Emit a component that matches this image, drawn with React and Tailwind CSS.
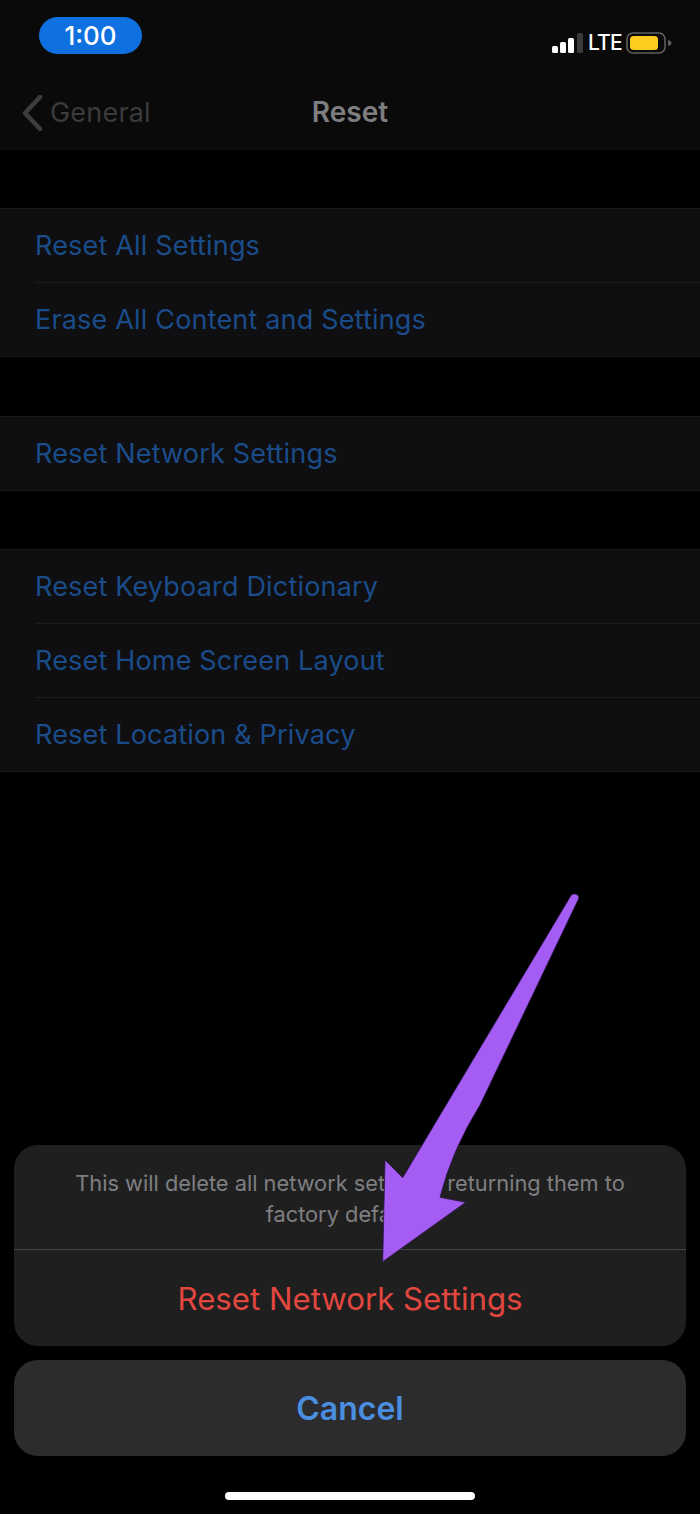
const font = { fontFamily: '"Inter", "Liberation Sans", sans-serif' };

function Row({ label, last }) {
  return (
    <div className="pl-[35px]">
      <div className={`flex items-center pt-[2px] text-[27px] tracking-[0.18px] text-[#1b4c8a] ${last ? "h-[73px]" : "h-[74px] border-b border-[#1d1d1f]"}`}>
        {label}
      </div>
    </div>
  );
}

function Group({ items, className }) {
  return (
    <section className={`bg-[#0f0f11] border-y border-[#1a1a1c] ${className}`}>
      {items.map((t, i) => (
        <Row key={t} label={t} last={i === items.length - 1} />
      ))}
    </section>
  );
}

function Signal() {
  return (
    <svg width="31" height="20" viewBox="0 0 31 20">
      <rect x="0" y="13" width="6" height="7" rx="1.5" fill="#fff" />
      <rect x="8" y="9" width="6" height="11" rx="1.5" fill="#fff" />
      <rect x="16" y="5" width="6" height="15" rx="1.5" fill="#fff" />
      <rect x="25" y="0" width="6" height="20" rx="1.5" fill="#3a3a3c" />
    </svg>
  );
}

function Battery() {
  return (
    <svg width="46" height="22" viewBox="0 0 46 22">
      <rect x="1" y="1" width="38" height="20" rx="6" fill="none" stroke="#5f5f5c" strokeWidth="1.6" />
      <rect x="4" y="4" width="28" height="14" rx="3.5" fill="#fccc1f" />
      <path d="M42 8 C44 8.5 45.5 9.5 45.5 11 C45.5 12.5 44 13.5 42 14 Z" fill="#5f5f5c" />
    </svg>
  );
}

export default function App() {
  return (
    <div className="relative w-[700px] h-[1514px] bg-black overflow-hidden flex flex-col" style={font}>
      <header className="h-[150px] shrink-0 bg-[#0a0a0b] border-b border-[#111113] flex flex-col">
        <div className="h-[71px] flex items-center justify-between pl-[39px] pr-[28px]">
          <div className="w-[103px] h-[37px] rounded-full bg-[#0f70e0] flex items-center justify-center text-white text-[26px] font-medium">
            1:00
          </div>
          <div className="flex items-center mt-[14px]">
            <Signal />
            <span className="ml-[5px] mr-[6px] w-[32px] text-white text-[21px] tracking-[-0.8px] font-medium leading-none">LTE</span>
            <Battery />
          </div>
        </div>
        <div className="relative flex-1 flex items-center justify-center">
          <div className="absolute left-[21px] top-[22px] flex items-center gap-[7px]">
            <svg width="22" height="36" viewBox="0 0 22 36" fill="none">
              <path d="M19 2 L4 18 L19 34" stroke="#3d3d3f" strokeWidth="4.5" strokeLinecap="round" strokeLinejoin="round" />
            </svg>
            <span className="text-[27px] tracking-[0.2px] text-[#3b3b3d]">General</span>
          </div>
          <h1 className="text-[28px] font-semibold text-[#7e7e80] mt-[4px]">Reset</h1>
        </div>
      </header>

      <main className="flex-1 flex flex-col">
        <Group className="mt-[58px]" items={["Reset All Settings", "Erase All Content and Settings"]} />
        <Group className="mt-[59px]" items={["Reset Network Settings"]} />
        <Group className="mt-[58px]" items={["Reset Keyboard Dictionary", "Reset Home Screen Layout", "Reset Location & Privacy"]} />

        <div className="mt-auto px-[14px] pb-[14px] flex flex-col items-center">
          <div className="w-full rounded-[24px] bg-[#1f1f20] overflow-hidden">
            <div className="h-[105px] border-b border-[#454546] flex items-center justify-center text-center text-[21.8px] leading-[31px] text-[#7f7f81] pt-[3px] px-[40px]">
              This will delete all network settings, returning them to factory defaults.
            </div>
            <div className="h-[96px] pt-[2px] flex items-center justify-center text-[31.2px] text-[#e2473f]">
              Reset Network Settings
            </div>
          </div>
          <div className="w-full h-[96px] pt-[2px] mt-[14px] rounded-[24px] bg-[#2c2c2e] flex items-center justify-center text-[32px] font-semibold text-[#4a8ee0]">
            Cancel
          </div>
          <div className="w-[250px] h-[8px] mt-[36px] rounded-full bg-white" />
        </div>
      </main>

      <svg className="absolute left-0 top-0 pointer-events-none" width="700" height="1514" viewBox="0 0 700 1514">
        <path
          d="M571 895.5 C572.5 893.5 576 893.5 578 895.5 C579 897 579 898.5 578 900 L480 1105 Q452 1150 440 1197.3 L465.7 1202.3 L382.7 1261.7 L385 1160 L402.7 1177.7 Z"
          fill="#a45cf2"
          stroke="#2a1448"
          strokeWidth="0.8"
          strokeLinejoin="round"
        />
      </svg>
    </div>
  );
}
